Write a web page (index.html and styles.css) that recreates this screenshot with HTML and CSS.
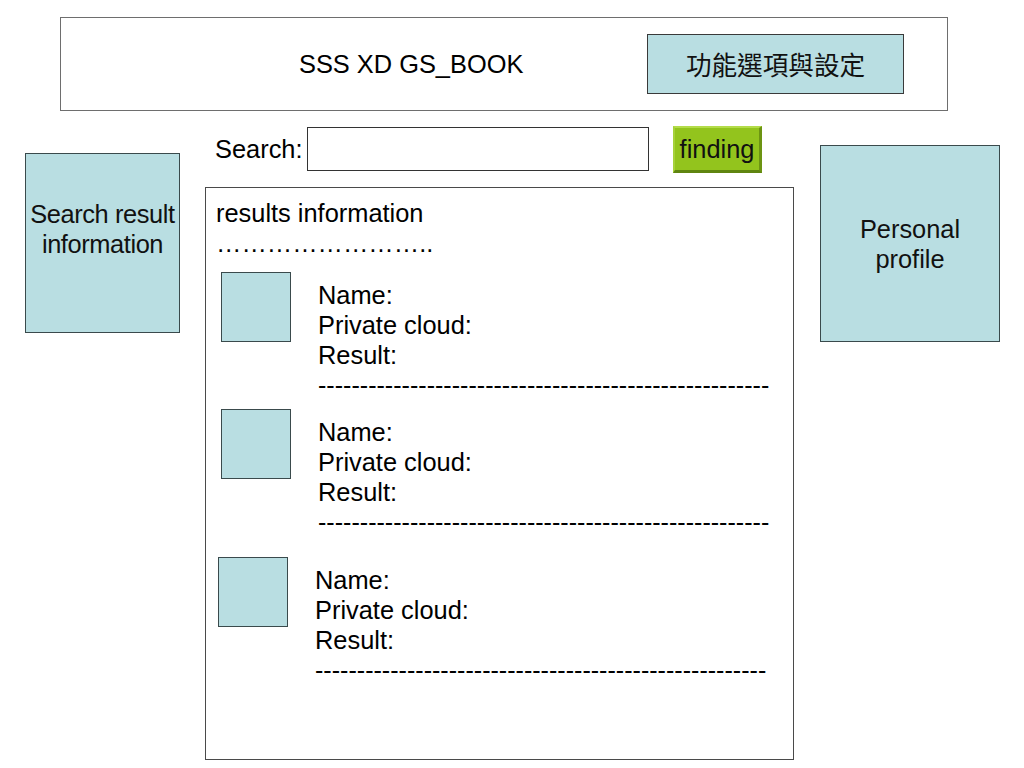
FILE: index.html
```html
<!DOCTYPE html>
<html lang="zh-Hant">
<head>
<meta charset="utf-8">
<title>SSS XD GS_BOOK</title>
<link rel="stylesheet" href="styles.css">
</head>
<body>
<header class="header">
  <div class="title">SSS XD GS_BOOK</div>
  <div class="settings">功能選項與設定</div>
</header>
<div class="row">
  <aside class="panel panel-left">Search result<br>information</aside>
  <main class="center">
    <div class="search">
      <span class="search-label">Search:</span>
      <div class="search-input"></div>
      <div class="finding">finding</div>
    </div>
    <section class="results">
      <div class="line">results information</div>
      <div class="line">……………………..</div>
      <div class="item item-1">
        <div class="thumb"></div>
        <div class="info">
          <div class="line">Name:</div>
          <div class="line">Private cloud:</div>
          <div class="line">Result:</div>
          <div class="line dashes">------------------------------------------------------</div>
        </div>
      </div>
      <div class="item item-2">
        <div class="thumb"></div>
        <div class="info">
          <div class="line">Name:</div>
          <div class="line">Private cloud:</div>
          <div class="line">Result:</div>
          <div class="line dashes">------------------------------------------------------</div>
        </div>
      </div>
      <div class="item item-3">
        <div class="thumb"></div>
        <div class="info">
          <div class="line">Name:</div>
          <div class="line">Private cloud:</div>
          <div class="line">Result:</div>
          <div class="line dashes">------------------------------------------------------</div>
        </div>
      </div>
    </section>
  </main>
  <aside class="panel panel-right">Personal<br>profile</aside>
</div>
</body>
</html>
```
FILE: styles.css
```css
* { box-sizing: border-box; }
html, body {
  margin: 0;
  background: #ffffff;
}
body {
  width: 1024px;
  height: 768px;
  overflow: hidden;
  font-family: "Liberation Sans", Arial, "Noto Sans CJK TC", sans-serif;
  font-size: 25.4px;
  line-height: 30px;
  color: #000;
}
.header {
  margin: 17px 0 0 60px;
  width: 888px;
  height: 94px;
  border: 1px solid #6e6e6e;
  display: flex;
  align-items: center;
  padding-right: 43px;
}
.title {
  margin-left: 238px;
  white-space: nowrap;
}
.settings {
  margin-left: auto;
  width: 257px;
  height: 60px;
  background: #b9dee2;
  border: 1px solid #3a3a3a;
  display: flex;
  align-items: center;
  justify-content: center;
  font-family: "Noto Sans CJK TC", "Liberation Sans", sans-serif;
  font-size: 25.6px;
  color: #111;
}
.row {
  display: flex;
  align-items: flex-start;
  padding-left: 25px;
}
.panel {
  background: #b9dee2;
  border: 1px solid #3a4a4c;
  text-align: center;
  color: #111;
}
.panel-left {
  margin-top: 42px;
  width: 155px;
  height: 180px;
  padding-top: 45px;
  white-space: nowrap;
  letter-spacing: -0.4px;
}
.panel-right {
  margin-top: 34px;
  margin-left: 26px;
  width: 180px;
  height: 197px;
  padding-top: 68px;
}
.center {
  margin-left: 25px;
  width: 589px;
  padding-top: 15px;
}
.search {
  display: flex;
  align-items: center;
  height: 46px;
}
.search-label {
  margin-left: 10px;
  width: 92px;
}
.search-input {
  width: 342px;
  height: 44px;
  border: 1px solid #333;
  background: #fff;
}
.finding {
  margin-left: 24px;
  width: 89px;
  height: 47px;
  background: #93c41d;
  border-top: 2px solid #b3dc4a;
  border-left: 2px solid #a6d23a;
  border-right: 3px solid #6c9412;
  border-bottom: 3px solid #5f8510;
  display: flex;
  align-items: center;
  justify-content: center;
  color: #111;
}
.results {
  margin-top: 15px;
  height: 573px;
  border: 1px solid #4a4a4a;
  padding: 10px 10px 0 10px;
}
.line {
  height: 30px;
  white-space: nowrap;
}
.dashes {
  font-size: 25.1px;
}
.item {
  display: flex;
  align-items: flex-start;
}
.thumb {
  width: 70px;
  height: 70px;
  background: #b9dee2;
  border: 1px solid #3a4a4c;
  margin-left: 5px;
  flex: none;
}
.info {
  margin-top: 8px;
  margin-left: 27px;
}
.item-1 { margin-top: 14px; }
.item-2 { margin-top: 9px; }
.item-3 { margin-top: 20px; margin-left: -3px; }
```
